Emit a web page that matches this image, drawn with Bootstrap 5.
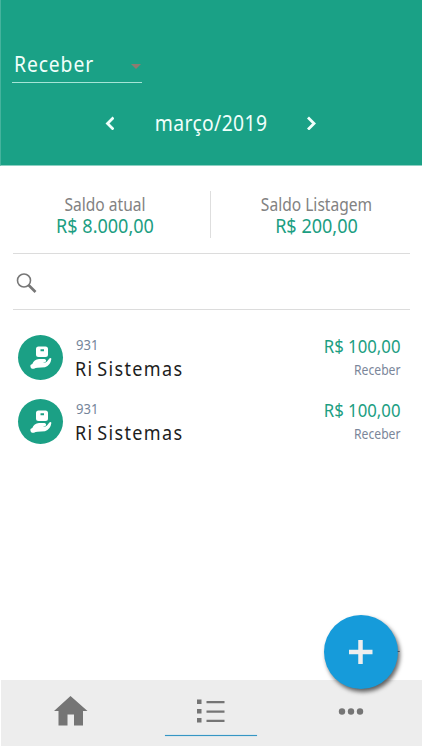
<!DOCTYPE html>
<html lang="pt-BR">
<head>
<meta charset="utf-8">
<meta name="viewport" content="width=device-width, initial-scale=1">
<title>Receber</title>
<link href="https://cdn.jsdelivr.net/npm/bootstrap@5.3.0/dist/css/bootstrap.min.css" rel="stylesheet">
<style>
body{font-family:"Noto Sans","Open Sans",sans-serif;background:#fff}
.screen{height:750px;overflow:hidden}
.green-head{height:166px;background:#1aa186;border-left:1px solid #45b39d;border-bottom:1px solid #8dd0c3;padding:48px 0 0 11px;color:#f0fffb}
.type-select{width:130px;height:35px;border-bottom:1px solid #a5e5d7;padding:0 1px 0 2px}
.type-select .cap{font-size:21px;line-height:32px;letter-spacing:.96px;transform:scaleX(.92);transform-origin:0 0}
.month-row{height:36px;margin:22px 0 0 -12px;padding-left:104px}
.month{font-size:21px;line-height:36px;width:120px;margin:0 36px;letter-spacing:.4px;transform:scaleX(.92)}
.summary{height:88px;margin:0 12px 0 13px;border-bottom:1px solid #dcdcdc}
.summary .cell{padding-top:27px}
.cell-left{width:184px;margin-right:13px}
.label-txt{font-size:17.5px;line-height:22px;color:#828282;height:22px;transform:scaleX(.89)}
.value-txt{font-size:19px;line-height:22px;color:#1c9e82;transform:scaleX(.95)}
.vline{width:1px;height:47px;margin-top:25px;background:#dedede}
.search{height:56px;margin:0 12px 0 13px;padding:19px 0 0 3px;border-bottom:1px solid #dcdcdc}
.entries{padding:25px 22px 0 18px}
.entry{height:64px}
.disc{width:45px;height:45px;background:#1ba085;margin-right:13px}
.num{font-size:14.5px;line-height:18px;height:20px;color:#75859a;transform:scaleX(.9);transform-origin:0 0}
.who{font-size:20px;line-height:28px;margin-left:-1px;color:#1d1d1d;letter-spacing:1.5px;word-spacing:-2.500px;transform:scaleX(.9);transform-origin:0 0}
.sum{font-size:18px;line-height:22px;height:25px;color:#1c9e82;transform:scaleX(.93);transform-origin:100% 0}
.kind{font-size:13.500px;line-height:20px;color:#7b869a;transform:scaleX(.9);transform-origin:100% 0}
.bar{height:66px;background:#ededed;margin:0 0 4px 1px;color:#757575}
.bar>a{color:inherit}
.bar .list-tab{padding:16px 1px 10px 0}
.bar .more-tab{padding:0 2px 3px 0}
.fab{position:absolute;left:324px;top:615px;width:74px;height:74px;background:#169bda;box-shadow:2px 3px 4px rgba(0,0,0,.6)}
.under{width:92px;height:1px;background:#3696c4;box-shadow:0 0 1px #58b4dc}
</style>
<script src="https://cdn.jsdelivr.net/npm/bootstrap@5.3.0/dist/js/bootstrap.bundle.min.js"></script>
</head>
<body>
<svg class="d-none">
<symbol id="hand" viewBox="0 0 45 45"><path fill="#fff" fill-rule="evenodd" d="M20.500 11.500h7q2.500 0 2.500 2.500v5.500q0 2.500-2.500 2.500h-7q-2.500 0-2.500-2.500V14q0-2.500 2.500-2.500zm2 2.800v2h3.500v-2z"/><path fill="#fff" d="M12.300 30.800q0-1.300 2-1.800 1.700-4.600 6.700-5h5.500q2.500.9 1.200 2.800l-2.700.9q2.500.1 4-1.200l2.400-3q1.400-1 2 .3-.9 6.700-6.400 8.500l-7.500.4q-2 0-3.500 1h-2.200q-1.500-.8-1.500-2.900z"/></symbol>
</svg>
<main class="screen position-relative d-flex flex-column">
  <header class="green-head flex-shrink-0">
    <div class="type-select d-flex align-items-start justify-content-between">
      <span class="cap">Receber</span>
      <svg width="10" height="5" class="mt-3" viewBox="0 0 10 5"><path d="M0 0h10L5 5z" fill="#8f7a70"/></svg>
    </div>
    <div class="month-row d-flex align-items-center">
      <svg width="10" height="14" viewBox="0 0 10 14" fill="none" stroke="#f0fffb" stroke-width="2.800"><path d="M9.500 1.500L3.500 7.500l6 6"/></svg>
      <span class="month text-nowrap text-center">março/2019</span>
      <svg width="10" height="14" viewBox="0 0 10 14" fill="none" stroke="#f0fffb" stroke-width="2.800"><path d="M2 1.500l6 6-6 6"/></svg>
    </div>
  </header>
  <section class="summary d-flex flex-shrink-0 text-center text-nowrap">
    <div class="cell cell-left"><div class="label-txt">Saldo atual</div><div class="value-txt">R$ 8.000,00</div></div>
    <div class="vline"></div>
    <div class="cell flex-grow-1 ps-2 ms-1"><div class="label-txt">Saldo Listagem</div><div class="value-txt">R$ 200,00</div></div>
  </section>
  <section class="search flex-shrink-0">
    <svg class="d-block" width="21" height="21" viewBox="0 0 21 21" fill="none" stroke="#777"><circle cx="8" cy="7.500" r="6.500" stroke-width="1.600"/><path d="M12.500 12l7 7" stroke-width="2.600"/></svg>
  </section>
  <section class="entries flex-grow-1 text-nowrap">
    <div class="entry d-flex">
      <div class="disc rounded-circle flex-shrink-0"><svg class="d-block" width="45" height="45"><use href="#hand"/></svg></div>
      <div class="flex-grow-1"><div class="num">931</div><div class="who">Ri Sistemas</div></div>
      <div class="text-end"><div class="sum">R$ 100,00</div><div class="kind">Receber</div></div>
    </div>
    <div class="entry d-flex">
      <div class="disc rounded-circle flex-shrink-0"><svg class="d-block" width="45" height="45"><use href="#hand"/></svg></div>
      <div class="flex-grow-1"><div class="num">931</div><div class="who">Ri Sistemas</div></div>
      <div class="text-end"><div class="sum">R$ 100,00</div><div class="kind">Receber</div></div>
    </div>
  </section>
  <nav class="bar row g-0 flex-shrink-0">
    <a class="col-4 d-flex justify-content-center pt-3" href="#"><svg width="34" height="31" viewBox="0 0 34 31"><path fill="#757575" d="M16.500 0L33.500 15H29v14.500h-9V18.500h-6.500v11h-9V15H0z"/></svg></a>
    <a class="list-tab col-4 d-flex flex-column align-items-center justify-content-between" href="#"><svg width="30" height="27" viewBox="0 0 30 27" fill="#757575"><path d="M1 3.500h4.500V8H1zM1 13h4.500v4.500H1zM1 22h4.500v4.500H1zM10.500 5h18v2.200h-18zm0 9.500h18v2.200h-18zm0 9.200h18v2.200h-18z"/></svg><span class="under"></span></a>
    <a class="more-tab col-4 d-flex justify-content-center align-items-center" href="#"><svg width="26" height="8" viewBox="0 0 26 8" fill="#757575"><circle cx="4" cy="3.500" r="3.200"/><circle cx="13" cy="3.500" r="3.200"/><circle cx="22" cy="3.500" r="3.200"/></svg></a>
  </nav>
  <button class="fab border-0 rounded-circle p-0 d-flex align-items-center justify-content-center" aria-label="Adicionar"><svg class="overflow-visible" width="24" height="24" viewBox="0 0 24 24" stroke="#eee" stroke-width="4.500"><path d="M11.500 0v24M0 12h23.500"/><path d="M48.500 11.500h2.200" stroke="#456" stroke-width="1"/></svg></button>
</main>
</body>
</html>
